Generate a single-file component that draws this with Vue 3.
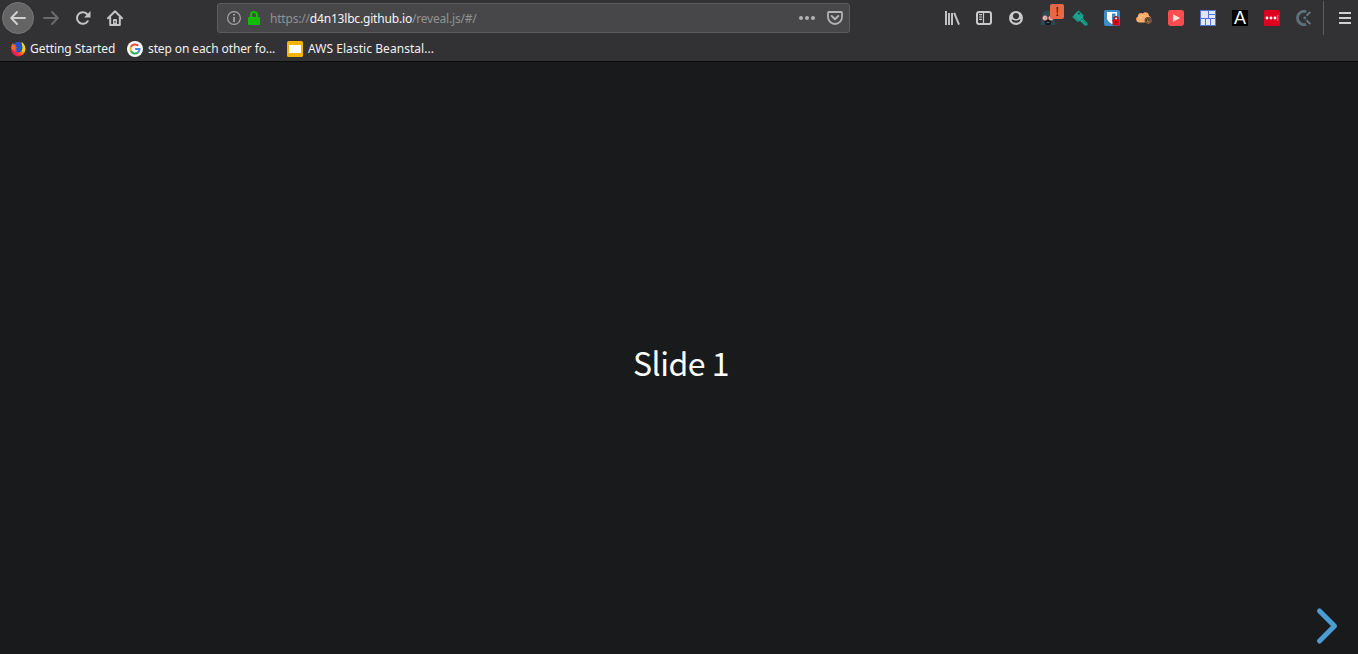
<script setup>
const bookmarks = [
  { icon: 'firefox', label: 'Getting Started' },
  { icon: 'google', label: 'step on each other fo...' },
  { icon: 'slides', label: 'AWS Elastic Beanstal...' },
]
</script>

<template>
  <div class="browser">
    <header class="chrome">
      <div class="toolbar">
        <nav class="nav">
          <button class="back" aria-label="Back">
            <svg width="16" height="16" viewBox="0 0 16 16"><path d="M15 8H1.5M7 2 1.2 8 7 14" fill="none" stroke="#d0d0d1" stroke-width="1.9" stroke-linecap="round" stroke-linejoin="round" /></svg>
          </button>
          <svg class="ico" width="16" height="16" viewBox="0 0 16 16"><path d="M1 8h13.5M9 2l5.8 6L9 14" fill="none" stroke="#6b6b6d" stroke-width="1.9" stroke-linecap="round" stroke-linejoin="round" /></svg>
          <svg class="ico" width="16" height="16" viewBox="0 0 16 16"><path d="M12.7 11.2A5.8 5.8 0 1 1 12 4" fill="none" stroke="#c4c4c5" stroke-width="2" stroke-linecap="round" /><path d="M15.5 1v6.5H9Z" fill="#c4c4c5" /></svg>
          <svg class="ico" width="16" height="16" viewBox="0 0 16 16"><path d="M1 8.2 8 1.2l7 7M3.2 7.5V15h9.6V7.5" fill="none" stroke="#c4c4c5" stroke-width="2" stroke-linecap="round" stroke-linejoin="round" /><path d="M6 15v-5a1 1 0 0 1 1-1h2a1 1 0 0 1 1 1v5Z" fill="#c4c4c5" /><path d="M7.5 11h1v2h-1z" fill="#323234" /></svg>
        </nav>

        <div class="address">
          <svg width="14" height="14" viewBox="0 0 14 14"><circle cx="7" cy="7" r="6.4" fill="none" stroke="#a9a9ab" stroke-width="1.1" /><path d="M6.3 3h1.5v1.6H6.3zM6.3 6h1.5v5H6.3z" fill="#b5b5b6" /></svg>
          <svg class="lock" width="12" height="14" viewBox="0 0 12 14"><path d="M3 7V4a3 3 0 0 1 6 0v3" fill="none" stroke="#12bc00" stroke-width="2" /><rect y="6" width="12" height="8" rx="1" fill="#12bc00" /></svg>
          <span class="url">https://<b>d4n13lbc.github.io</b>/reveal.js/#/</span>
          <svg class="dots" width="16" height="4" viewBox="0 0 16 4"><g fill="#b3b3b4"><circle cx="2" cy="2" r="2" /><circle cx="8" cy="2" r="2" /><circle cx="14" cy="2" r="2" /></g></svg>
          <svg class="pocket" width="16" height="14" viewBox="0 0 16 14"><path d="M2 1h12a1 1 0 0 1 1 1v4a7 7 0 0 1-14 0V2a1 1 0 0 1 1-1Z" fill="none" stroke="#b3b3b4" stroke-width="1.8" /><path d="m4.7 5 3.3 3.2L11.3 5" fill="none" stroke="#b3b3b4" stroke-width="2" stroke-linecap="round" stroke-linejoin="round" /></svg>
        </div>

        <div class="extensions">
          <svg width="16" height="16" viewBox="0 0 16 16"><g fill="#c1c1c2"><path d="M1 1h2v14H1zM4 3h2v12H4zM7 3h2v12H7z" /></g><path d="M10.2 2.8 15 14.7" stroke="#c1c1c2" stroke-width="2" /></svg>
          <svg width="16" height="16" viewBox="0 0 16 16"><rect x="1" y="2" width="14" height="12" rx="2" fill="none" stroke="#c9c9ca" stroke-width="2" /><path d="M7.5 2v12M3 4.6h3M3 7h3M3 9.4h3" stroke="#c9c9ca" stroke-width="1.2" /></svg>
          <svg width="16" height="16" viewBox="0 0 16 16"><circle cx="8" cy="8" r="7" fill="#c9c9ca" /><circle cx="8" cy="6" r="3" fill="#323234" /><path d="M3.5 9.2c.3 4.8 8.7 4.8 9 0-1.3.4-2.4 1.3-4.5 1.3s-3.2-.9-4.5-1.3Z" fill="#323234" /></svg>
          <div class="badged">
            <svg width="16" height="16" viewBox="0 0 16 16"><path d="M2 6c0-3.5 2.7-5.5 6-5.5S14 3 14 6l1.5 9H.5Z" fill="#2c4a54" /><path d="M4 10h8l-1.5 5h-5Z" fill="#14191d" /><g fill="#f6efec" stroke="#e07768" stroke-width="1"><circle cx="5" cy="8" r="2.2" /><circle cx="11" cy="8" r="2.2" /></g><path d="M4.5 7.5h1.4v1H4.5zm5.6 0h1.4v1h-1.4z" fill="#5b3434" /><path d="M6.5 12.5h3" stroke="#55747d" stroke-width="1" /></svg>
            <span class="badge">!</span>
          </div>
          <svg width="16" height="16" viewBox="0 0 16 16"><path d="m6.5.2 5.3 5.4-1 2.8 4.8 4.5v2.6h-3L8.1 11 5.7 12 .2 7Z" fill="#159a86" /><path d="m5 1.8 5.8 5.5L15 15.3 8.1 11 2 5Z" fill="#24ad99" opacity=".5" /><circle cx="6.8" cy="3.5" r="1" fill="#303336" /><path d="m8.5 10 1.3-1.2 4.5 4.8" fill="none" stroke="#087c6d" /></svg>
          <svg width="16" height="16" viewBox="0 0 16 16"><rect width="16" height="16" rx="2" fill="#3c8dcc" /><path d="M3 2h10v6c0 3.5-5 6-5 6S3 11.5 3 8Z" fill="#fff" /><path d="M8 3.5h3.5V8c0 2-3.5 4-3.5 4Z" fill="#3c8dcc" /><path d="M10 10V8.7a2 2 0 0 1 4 0V10" fill="none" stroke="#a9141d" stroke-width="1.4" /><rect x="8.5" y="9.3" width="7" height="6.2" rx="1" fill="#d90711" /><path d="M11.5 11h1v2h-1z" fill="#610006" /></svg>
          <svg width="16" height="16" viewBox="0 0 16 16"><path d="M3 12.5C-.5 12-.7 7.5 2 6.5 1.7 3.5 5 2 7 3.6 9 1 13 2.5 13 6c3 .7 3 5.2.3 6.5Z" fill="#ffad69" /><path d="M4 8c2-1 1-3 3-3" fill="none" stroke="#ffc693" stroke-width="1.5" /><circle cx="12.3" cy="10.7" r="3.7" fill="#3c3731" /><circle cx="12.3" cy="10.7" r="2.8" fill="none" stroke="#bd7846" stroke-width=".9" stroke-dasharray="2.3 .7" /><path d="M11 10.2h.8m1 0h.8M11 11.8h2.7" stroke="#f4a366" stroke-width=".9" /></svg>
          <svg width="16" height="16" viewBox="0 0 16 16"><rect width="16" height="16" rx="2.4" fill="#fc4e50" /><path d="m5 4.3 7.2 3.6L5 11.8Z" fill="#ffe3dd" /></svg>
          <svg width="16" height="16" viewBox="0 0 16 16"><path d="M0 0h16v16H0z" fill="#4f75d7" /><path d="M1 1h7v7H1zm8 0h6v3H9zm0 4h6v3H9zM1 9h4v6H1zm5 0h4v6H6zm5 0h4v6h-4z" fill="#e3e6f8" /></svg>
          <span class="letter">A</span>
          <svg width="16" height="16" viewBox="0 0 16 16"><rect width="16" height="16" rx="1.5" fill="#df001f" /><g fill="#fff"><circle cx="3" cy="8" r="1.4" /><circle cx="7" cy="8" r="1.4" /><circle cx="11" cy="8" r="1.4" /></g><path d="M13.8 5v6" stroke="#f27687" /></svg>
          <svg width="16" height="16" viewBox="0 0 16 16"><path d="M10.2 1.6A6.7 6.7 0 1 0 10.2 14.4" fill="none" stroke="#5d707a" stroke-width="2.8" /><circle cx="8.8" cy="8" r="1.4" fill="#62747d" /><path d="m10.5 5.8 3.8-3.9m-3.8 8.3 3.8 3.9" stroke="#657780" stroke-width="2" /></svg>
        </div>
        <div class="divider"></div>
        <svg class="menu" width="12" height="12" viewBox="0 0 12 12"><path d="M0 1h12M0 6h12M0 11h12" stroke="#d0d0d1" stroke-width="2" /></svg>
      </div>

      <div class="bookmarks">
        <div v-for="item in bookmarks" :key="item.label" class="bookmark" :class="item.icon">
          <svg v-if="item.icon === 'firefox'" width="16" height="16" viewBox="0 0 16 16">
            <defs><linearGradient id="flame" x1="1" y1="0" x2="0" y2="1"><stop stop-color="#fff044" /><stop offset=".4" stop-color="#ffa400" /><stop offset=".68" stop-color="#ff293d" /><stop offset="1" stop-color="#e00068" /></linearGradient></defs>
            <circle cx="8.3" cy="8.4" r="7" fill="url(#flame)" />
            <path d="M3.4 3.4A6.6 6.6 0 0 1 11 1.6c1.2 1.6 1.8 3.4 1.6 5.6-.2 2.8-2 4.3-4.2 4.3-2 0-3.6-1.3-3.8-3.2Z" fill="#2350cf" />
            <path d="M1.4 8C1 5.500 1.800 3.300 3 2l.8 1.700 2.200.3-.8 1.700 2 1.100-1.800 1.100c-.5 1 .8 1.900 2.300 1.700-1.300 1.400-3.300.7-4.200-.6Z" fill="#ff6a1c" />
            <path d="M11.200.8c3.600 2 5 6.200 3.500 9.700l-2.900-.5c1.500-2.700 1-6-.6-9.200Z" fill="#ffd21f" />
          </svg>
          <svg v-else-if="item.icon === 'google'" width="16" height="16" viewBox="0 0 16 16"><circle cx="8" cy="8" r="8" fill="#fff" /><g fill="none" stroke-width="2.1"><path d="M11.2 4.8A4.6 4.6 0 0 0 3.9 6" stroke="#ea4335" /><path d="M3.9 6a4.6 4.6 0 0 0 0 4" stroke="#fbbc05" /><path d="M3.9 10a4.6 4.6 0 0 0 7 1.5" stroke="#34a853" /><path d="M10.9 11.5A4.6 4.6 0 0 0 12.5 8H8.1" stroke="#4285f4" /></g></svg>
          <svg v-else width="16" height="16" viewBox="0 0 16 16"><rect width="16" height="16" rx="1.5" fill="#f4b400" /><path d="M2 4h12v8H2z" fill="#fff" /></svg>
          <span>{{ item.label }}</span>
        </div>
      </div>
    </header>

    <main class="slide">
      <p>Slide 1</p>
      <svg class="next" width="24" height="38" viewBox="0 0 24 38"><path d="m4.5 4 15 15-15 15" fill="none" stroke="#4b9cd3" stroke-width="5" stroke-linecap="round" stroke-linejoin="round" /></svg>
    </main>
  </div>
</template>

<style scoped>
.browser { height: 654px; display: flex; flex-direction: column; overflow: hidden; background: #181a1b; font-family: "Noto Sans", sans-serif; }
.chrome { height: 61px; flex: none; background: #323234; border-bottom: 1px solid #09090a; }
.toolbar { height: 36px; display: flex; align-items: center; }
svg { display: block; flex: none; }
.nav { width: 217px; display: flex; align-items: center; padding-left: 2px; box-sizing: border-box; }
.back { width: 32px; height: 32px; display: grid; place-items: center; padding: 0; border: 1px solid #777778; border-radius: 50%; background: #646465; box-sizing: border-box; }
.ico { margin-left: 9px; }
.ico + .ico { margin-left: 16px; }
.address { width: 633px; height: 30px; display: flex; align-items: center; box-sizing: border-box; padding: 0 6px 0 9px; background: #474749; border: 1px solid #5c5c5e; border-radius: 3px; }
.lock { margin-left: 7px; }
.url { margin-left: 10px; padding-top: 2px; color: #929293; font-size: 12px; line-height: 18px; letter-spacing: -0.2px; white-space: nowrap; }
.url b { color: #f4f4f5; font-weight: 400; letter-spacing: -0.18px; }
.url { word-spacing: 0; }
.dots { margin-left: auto; }
.pocket { margin-left: 12px; }
.extensions { display: flex; gap: 16px; margin-left: 94px; }
.badged { position: relative; width: 16px; height: 16px; }
.badge { position: absolute; left: 10px; top: -6px; width: 14px; height: 15px; border-radius: 2px; background: #e96748; color: #171311; font: 12px/15px "Noto Sans", sans-serif; text-align: center; }
.letter { width: 16px; height: 16px; background: #000; color: #fff; font: 18px/17px "Liberation Sans", sans-serif; text-align: center; }
.divider { width: 1px; height: 34px; margin-left: 11px; background: #5d5d5f; }
.menu { margin-left: 15px; }
.bookmarks { height: 25px; display: flex; padding-left: 10px; }
.bookmark { display: flex; align-items: center; gap: 4px; color: #f0f0f1; font-size: 12px; line-height: 18px; white-space: nowrap; }
.firefox { width: 117px; letter-spacing: -0.06px; }
.google { width: 160px; gap: 5px; letter-spacing: -0.11px; }
.slides { gap: 5px; letter-spacing: 0.05px; }
.slide { position: relative; flex: 1; display: grid; place-items: center; background: #181a1b; }
.slide p { margin: 0; padding: 8px 0 0 4px; color: #fff; font: 32px/44px "Noto Sans CJK SC", sans-serif; letter-spacing: -0.5px; }
.next { position: absolute; right: 19px; bottom: 9px; }
</style>

<style>
body { margin: 0; background: #181a1b; }
</style>
